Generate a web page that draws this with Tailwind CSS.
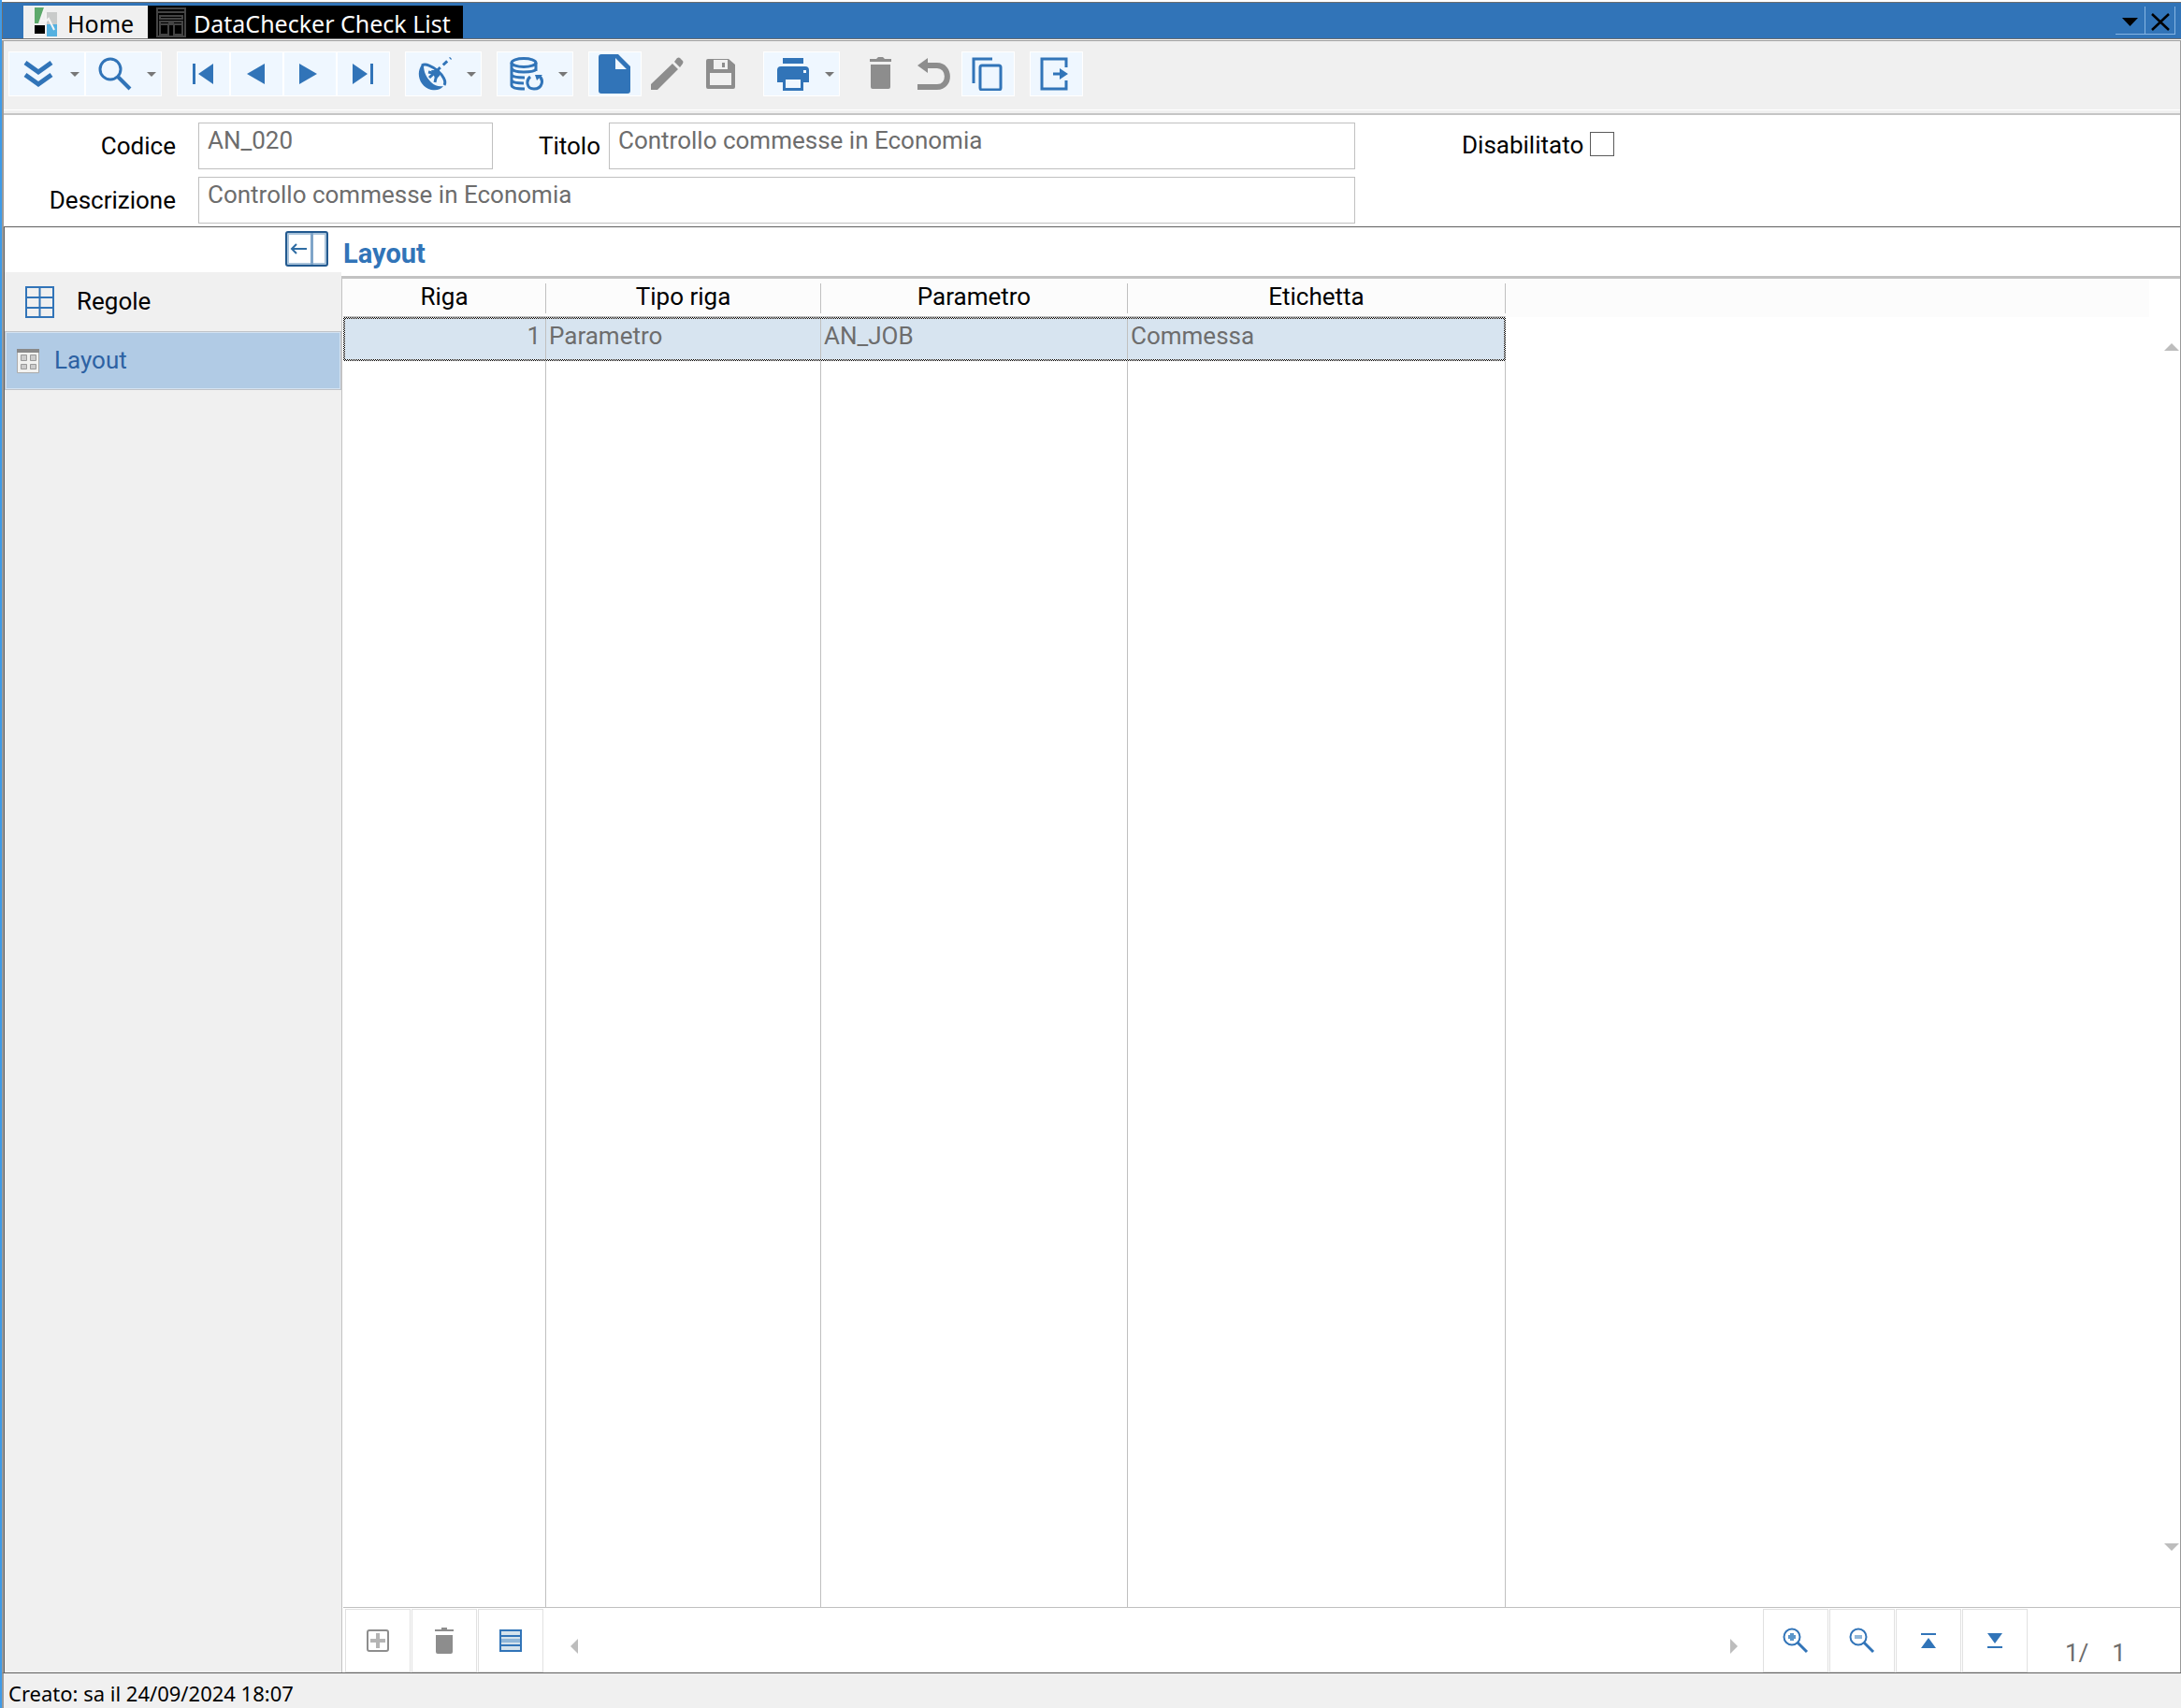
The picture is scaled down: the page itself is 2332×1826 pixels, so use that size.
<!DOCTYPE html>
<html lang="it">
<head>
    <meta charset="UTF-8">
    <meta name="viewport" content="width=device-width, initial-scale=1.0">
    <title>DataChecker Check List</title>
    <script src="https://cdn.jsdelivr.net/npm/@tailwindcss/browser@4"></script>
</head>
<body class="h-screen flex flex-col bg-white text-black text-[26px] leading-[30px] font-['Roboto',sans-serif] border-l-2 border-[#3f9be8]">

<!-- Window tabs -->
<header class="mt-[2px] h-10 flex shrink-0 items-stretch border-y border-l border-[#6e6e6e] bg-[#3174b8] pl-[22px] font-['Noto_Sans',sans-serif] text-[25px] leading-[34px]">
    <nav class="flex pt-[3px]">
        <a href="#" class="flex w-[133px] items-center gap-[11px] bg-[#f0f0f0] pl-3">
            <svg class="w-6 h-8" viewBox="0 0 24 32">
                <path fill="#5da96b" d="M0 0h11L5 17H0z"/>
                <path fill="#c9cbca" d="M13 5h11v13H13z"/>
                <path fill="#000" d="M0 19h11v9H0z"/>
                <path fill="#55b1e0" d="M13 18h11v13H13z"/>
                <path fill="none" stroke="#f4f4f4" stroke-width="2" d="M11 0L5 17M6 14h7l2-2 6 12M12 6v10"/>
            </svg>
            <span class="pt-[3px]">Home</span>
        </a>
        <a href="#" class="flex items-center gap-2 bg-black pl-[9px] pr-[13px] text-white">
            <svg class="w-8 h-8" viewBox="0 0 32 32" fill="none" stroke="#444" stroke-width="2">
                <path d="M1 1h30v30H1zM1 5h30M4 9h24v3H4zM4 15h24v3H4zM4 18h9v11H4zM19 18h9v11h-9z"/>
                <path stroke="none" fill="#444" d="M13 14h6v4h-6z"/>
            </svg>
            <span class="pt-[3px]">DataChecker Check List</span>
        </a>
    </nav>
    <div class="ml-auto mr-[6px] mt-1 flex h-[30px]">
        <button class="flex w-8 items-center justify-center border-r border-b border-[#86b5e3] pt-1" aria-label="Elenco finestre">
            <svg class="w-[17px] h-[9px]" viewBox="0 0 17 9"><path d="M0 0h17L8.500 9z"/></svg>
        </button>
        <button class="flex w-8 items-center justify-center border-r border-b border-[#86b5e3] pt-[2px]" aria-label="Chiudi">
            <svg class="w-5 h-5" viewBox="0 0 20 20" stroke="#000" stroke-width="2.500"><path d="M1 2l18 17M19 2L1 19"/></svg>
        </button>
    </div>
</header>

<div class="mt-px flex flex-1 min-h-0 flex-col border-l-2 border-r border-t border-[#9a9a9a]">

    <!-- Toolbar -->
    <div class="flex h-[79px] shrink-0 items-start gap-4 border-b-2 border-[#c5c5c5] bg-[#f0f0f0] pl-[5px] pt-[11px] text-[#3174b8] shadow-[inset_0_-3px_0_#f0f0f0,inset_0_-4px_0_#fff]">
        <div class="flex">
            <button class="flex h-12 w-[82px] items-center gap-4 border border-white bg-[#eff7ff] pl-[13px]" aria-label="Espandi">
                <svg class="w-9 h-9" viewBox="0 0 36 36" fill="none" stroke="currentColor" stroke-width="5"><path d="M4 6l14 10L32 6M4 19l14 10 14-10"/></svg>
                <svg class="w-[10px] h-[5px] fill-[#777]" viewBox="0 0 10 5"><path d="M0 0h10L5 5z"/></svg>
            </button>
            <button class="flex h-12 w-[82px] items-center gap-4 border border-white bg-[#eff7ff] pl-[13px]" aria-label="Cerca">
                <svg class="w-9 h-9" viewBox="0 0 36 36" fill="none" stroke="currentColor" stroke-width="3"><circle cx="13" cy="13" r="11"/><path stroke-width="4" d="M21 21l13 13"/></svg>
                <svg class="w-[10px] h-[5px] fill-[#777]" viewBox="0 0 10 5"><path d="M0 0h10L5 5z"/></svg>
            </button>
        </div>
        <div class="flex">
            <button class="flex h-12 w-[57px] items-center border border-white bg-[#eff7ff] pl-[9px]" aria-label="Primo">
                <svg class="w-9 h-9" viewBox="0 0 36 36" fill="currentColor"><path d="M7 7h3v22H7zM29 7v22L13 18z"/></svg>
            </button>
            <button class="flex h-12 w-[57px] items-center border border-white bg-[#eff7ff] pl-[9px]" aria-label="Precedente">
                <svg class="w-9 h-9" viewBox="0 0 36 36" fill="currentColor"><path d="M27 7v22L8 18z"/></svg>
            </button>
            <button class="flex h-12 w-[57px] items-center border border-white bg-[#eff7ff] pl-[9px]" aria-label="Successivo">
                <svg class="w-9 h-9" viewBox="0 0 36 36" fill="currentColor"><path d="M7 7v22l19-11z"/></svg>
            </button>
            <button class="flex h-12 w-[57px] items-center border border-white bg-[#eff7ff] pl-[9px]" aria-label="Ultimo">
                <svg class="w-9 h-9" viewBox="0 0 36 36" fill="currentColor"><path d="M26 7h3v22h-3zM7 7v22l16-11z"/></svg>
            </button>
        </div>
        <button class="flex h-12 w-[82px] items-center gap-4 border border-white bg-[#eff7ff] pl-[13px]" aria-label="Radar">
            <svg class="w-9 h-9" viewBox="0 0 36 36" fill="none" stroke="currentColor"><path fill="currentColor" stroke="none" d="M4 8C-3 18 2 32 14 35c6 1 10 0 13-4-4 1-9 0-13-4C9 22 6 16 6 9z"/><path stroke-width="3" d="M4 9c8-5 29 13 24 21M11 16l9 2-2 9"/><path fill="currentColor" stroke="none" d="M14 14l9 0 0 6-4 4z"/><path stroke-width="3" stroke-dasharray="6 4" d="M12 22L35 1"/></svg>
            <svg class="w-[10px] h-[5px] fill-[#777]" viewBox="0 0 10 5"><path d="M0 0h10L5 5z"/></svg>
        </button>
        <button class="flex h-12 w-[82px] items-center gap-4 border border-white bg-[#eff7ff] pl-[13px]" aria-label="Aggiorna dati">
            <svg class="w-9 h-9" viewBox="0 0 36 36" fill="none" stroke="currentColor" stroke-width="3"><ellipse cx="15" cy="6" rx="13" ry="4.500"/><path d="M2 6v24c0 3 6 4 14 4M28 6v9M2 12c1 3 7 4 13 4 6 0 12-1 13-3M2 19c1 2 6 3 14 3M2 25c1 2 6 3 13 3M22 21c-5 4-4 13 4 13 9 0 11-10 5-14"/><path fill="currentColor" stroke="none" d="M27 19h8l-6 6z"/></svg>
            <svg class="w-[10px] h-[5px] fill-[#777]" viewBox="0 0 10 5"><path d="M0 0h10L5 5z"/></svg>
        </button>
        <div class="flex">
            <button class="flex h-12 w-[57px] items-center border border-white bg-[#eff7ff] pl-[10px]" aria-label="Nuovo">
                <svg class="w-[34px] h-[42px]" viewBox="0 0 34 42" fill="currentColor"><path fill-rule="evenodd" d="M3 0h18l13 13v26q0 3-3 3H3q-3 0-3-3V3q0-3 3-3zm15 4v12h12z"/></svg>
            </button>
            <button class="flex h-12 w-[57px] items-center pl-[10px] text-[#8d8d8d]" aria-label="Modifica">
                <svg class="w-9 h-9" viewBox="0 0 36 36" fill="currentColor"><path d="M0 29L23 7l6 6L7 35H0zM25 5l3-4q2-1 3 0l3 3q1 1 0 3l-3 4z"/></svg>
            </button>
            <button class="flex h-12 w-[57px] items-center pl-[10px] text-[#8d8d8d]" aria-label="Salva">
                <svg class="w-9 h-9" viewBox="0 0 36 36" fill="currentColor"><path fill-rule="evenodd" d="M4 2h22l7 6v24q0 2-2 2H4q-2 0-2-2V4q0-2 2-2zm6 1v10h15V3zm9 3h3v5h-3zM6 17v13h23V17z"/></svg>
            </button>
        </div>
        <button class="flex h-12 w-[82px] items-center gap-4 border border-white bg-[#eff7ff] pl-[13px]" aria-label="Stampa">
            <svg class="w-9 h-9" viewBox="0 0 36 36" fill="currentColor"><path fill-rule="evenodd" d="M7 1h22v6H7zM5 10h26q4 0 4 4v13h-6v9H7v-9H1V14q0-4 4-4zm5 14v9h16v-9zm19-10v3h3v-3z"/></svg>
            <svg class="w-[10px] h-[5px] fill-[#777]" viewBox="0 0 10 5"><path d="M0 0h10L5 5z"/></svg>
        </button>
        <div class="flex">
            <button class="flex h-12 w-[57px] items-center pl-[10px] text-[#8d8d8d]" aria-label="Elimina">
                <svg class="w-9 h-9" viewBox="0 0 36 36" fill="currentColor"><path d="M6 2h7l2-2h5l2 2h7v3H6zM7 8h21v24q0 2-2 2H9q-2 0-2-2z"/></svg>
            </button>
            <button class="flex h-12 w-[57px] items-center pl-[10px] text-[#8d8d8d]" aria-label="Annulla">
                <svg class="w-9 h-9" viewBox="0 0 36 36"><path fill="currentColor" d="M0 9l11-8v16z"/><path fill="none" stroke="currentColor" stroke-width="6" d="M9 9h12c14 0 15 23 0 23H0"/></svg>
            </button>
            <button class="flex h-12 w-[57px] items-center border border-white bg-[#eff7ff] pl-[9px]" aria-label="Duplica">
                <svg class="w-9 h-9" viewBox="0 0 36 36" fill="none" stroke="currentColor" stroke-width="3"><path d="M3 28V2h20"/><rect x="10" y="9" width="22" height="26" rx="2"/></svg>
            </button>
        </div>
        <button class="flex h-12 w-[57px] items-center border border-white bg-[#eff7ff] pl-[9px]" aria-label="Esci">
            <svg class="w-9 h-9" viewBox="0 0 36 36" fill="none" stroke="currentColor" stroke-width="3"><path d="M29 11V2H3v32h26v-9"/><path d="M15 18h12"/><path fill="currentColor" stroke="none" d="M22 12l9 6-9 6z"/></svg>
        </button>
    </div>

    <!-- Record header -->
    <form class="flex h-[120px] shrink-0 flex-col gap-2 border-b border-[#5f5f5f] pt-2">
        <div class="flex items-center">
            <label for="codice" class="w-[184px] text-right">Codice</label>
            <input id="codice" value="AN_020" readonly class="ml-6 h-[50px] w-[315px] border border-[#c0c0c0] px-[9px] pb-3 text-[#6d6d6d]">
            <label for="titolo" class="w-[115px] text-right">Titolo</label>
            <input id="titolo" value="Controllo commesse in Economia" readonly class="ml-[9px] h-[50px] w-[798px] border border-[#c0c0c0] px-[9px] pb-3 text-[#6d6d6d]">
            <label for="disabilitato" class="ml-[114px] pb-[2px]">Disabilitato</label>
            <input id="disabilitato" type="checkbox" class="mb-1 ml-[7px] size-[26px] appearance-none border border-[#5a5a5a]">
        </div>
        <div class="flex items-center">
            <label for="descrizione" class="w-[184px] text-right">Descrizione</label>
            <input id="descrizione" value="Controllo commesse in Economia" readonly class="ml-6 h-[50px] w-[1237px] border border-[#c0c0c0] px-[9px] pb-3 text-[#6d6d6d]">
        </div>
    </form>

    <div class="flex min-h-0 flex-1 border-l border-[#5f5f5f]">
        <!-- Side menu -->
        <aside class="flex w-[360px] shrink-0 flex-col bg-[#f0f0f0]">
            <div class="flex h-12 justify-end bg-white pr-[14px] pt-1">
                <button class="h-[38px] w-[46px]" aria-label="Comprimi menu">
                    <svg class="h-[38px] w-[46px]" viewBox="0 0 46 38" fill="none" stroke="#22598f" stroke-width="2"><rect x="3" y="3" width="40" height="32" stroke="#a9c3da"/><rect x="1" y="1" width="44" height="36" rx="2"/><path stroke="#7fa5c9" stroke-width="3" d="M28.500 2v34"/><path stroke="#2f6ca3" d="M7 19h16M12 14l-5 5 5 5"/></svg>
                </button>
            </div>
            <a href="#" class="flex h-[63px] items-center gap-6 pl-[22px]">
                <svg class="h-[34px] w-[31px]" viewBox="0 0 31 34" fill="none" stroke="#3174b8" stroke-width="2"><path d="M1 1h29v32H1zM15.500 1v32M1 12h29M1 23h29"/></svg>
                <span class="pb-px">Regole</span>
            </a>
            <a href="#" class="flex h-[63px] items-center gap-4 border border-[#c0c3c8] bg-[#b1cbe5] pl-3 text-[#2d62a3] shadow-[inset_0_0_0_1px_#d3e2f2]">
                <svg class="h-[26px] w-6" viewBox="0 0 24 26"><path fill="#f2f2f0" stroke="#aaa" d="M.5.5h23v25H.5z"/><path fill="#8a8a8a" d="M0 0h24v4H0z"/><path fill="#ccc" stroke="#999" d="M4.500 6.500h6v6h-6zM14.500 6.500h6v6h-6zM4.500 16.500h6v5h-6zM14.500 16.500h6v5h-6z"/></svg>
                <span class="pb-px">Layout</span>
            </a>
        </aside>

        <main class="flex min-w-0 flex-1 flex-col">
            <h1 class="h-[52px] pl-[2px] pt-[11px] text-[29px] leading-[34px] font-bold text-[#3174b8]">Layout</h1>
            <div class="flex min-h-0 flex-1 flex-col border-l border-t-[3px] border-[#c3c3c3]">
                <div class="relative min-h-0 flex-1 pl-px bg-[linear-gradient(#fcfcfc,#fcfcfc)] bg-[length:calc(100%-33px)_41px] bg-no-repeat">
                    <table class="h-full table-fixed border-separate border-spacing-0">
                        <colgroup>
                            <col class="w-[217px]"><col class="w-[294px]"><col class="w-[328px]"><col class="w-[404px]">
                        </colgroup>
                        <thead>
                        <tr class="h-[41px] *:border-b *:border-[#c0c0c0] *:p-0 *:pt-[5px] *:font-normal *:leading-7">
                            <th><div class="h-8 border-r border-[#c0c0c0] mb-[3px]">Riga</div></th>
                            <th><div class="h-8 border-r border-[#c0c0c0] mb-[3px]">Tipo riga</div></th>
                            <th><div class="h-8 border-r border-[#c0c0c0] mb-[3px]">Parametro</div></th>
                            <th><div class="h-8 border-r border-[#c0c0c0] mb-[3px]">Etichetta</div></th>
                        </tr>
                        </thead>
                        <tbody>
                        <tr class="h-[47px] bg-[repeating-conic-gradient(#000_0_25%,#fff_0_50%)] bg-[length:2px_2px] text-[#6d6d6d] *:p-0 *:align-top *:leading-7">
                            <td class="border-y-2 border-l-2 border-transparent bg-[#d7e4f0] bg-clip-padding"><div class="h-[43px] border-r border-[#c0c0c0] pt-1 pr-[5px] text-right">1</div></td>
                            <td class="border-y-2 border-transparent bg-[#d7e4f0] bg-clip-padding"><div class="h-[43px] border-r border-[#c0c0c0] pl-[3px] pt-1">Parametro</div></td>
                            <td class="border-y-2 border-transparent bg-[#d7e4f0] bg-clip-padding"><div class="h-[43px] border-r border-[#c0c0c0] pl-[3px] pt-1">AN_JOB</div></td>
                            <td class="border-y-2 border-r-2 border-transparent bg-[#d7e4f0] bg-clip-padding"><div class="h-[43px] pl-[3px] pt-1">Commessa</div></td>
                        </tr>
                        <tr class="*:border-r *:border-[#c0c0c0]" aria-hidden="true"><td></td><td></td><td></td><td></td></tr>
                        </tbody>
                    </table>
                    <div class="absolute right-px top-[69px] bottom-[60px] flex flex-col justify-between" aria-hidden="true">
                        <svg class="h-2 w-4 fill-[#bdbdbd]" viewBox="0 0 16 8"><path d="M0 8h16L8 0z"/></svg>
                        <svg class="h-2 w-4 fill-[#bdbdbd]" viewBox="0 0 16 8"><path d="M0 0h16L8 8z"/></svg>
                    </div>
                </div>

                <!-- Grid footer -->
                <div class="ml-px flex h-[70px] shrink-0 items-start border-t border-[#c0c0c0] pl-[2px] pt-px text-[#3174b8]">
                    <div class="flex gap-px">
                        <button class="flex h-[68px] w-[70px] items-center justify-center border border-[#e1e1e1] text-[#8d8d8d]" aria-label="Aggiungi riga">
                            <svg class="size-6" viewBox="0 0 24 24" fill="none" stroke="currentColor" stroke-width="2"><rect x="1" y="1" width="22" height="22" rx="2"/><path stroke="#b4b4b4" stroke-width="4" d="M12 4v16M4 12h16"/></svg>
                        </button>
                        <button class="flex h-[68px] w-[70px] items-center justify-center border border-[#e1e1e1] text-[#8d8d8d]" aria-label="Elimina riga">
                            <svg class="h-7 w-6" viewBox="0 0 24 28" fill="currentColor"><path d="M2 2h7V0h6v2h7v2H2zM3 8h18v18q0 2-2 2H5q-2 0-2-2z"/></svg>
                        </button>
                        <button class="flex h-[68px] w-[70px] items-center justify-center border border-[#e1e1e1]" aria-label="Vista griglia">
                            <svg class="size-6" viewBox="0 0 24 24"><path fill="#d4e2ec" d="M0 0h24v24H0z"/><path fill="#8fb6d8" d="M1 10h22v4H1z"/><path fill="none" stroke="currentColor" stroke-width="2" d="M1 1h22v22H1zM1 7h22M1 17h22"/></svg>
                        </button>
                    </div>
                    <svg class="ml-[29px] mt-8 h-4 w-2 fill-[#bdbdbd]" viewBox="0 0 8 16"><path d="M8 0v16L0 8z"/></svg>
                    <svg class="ml-auto mr-[27px] mt-8 h-4 w-2 fill-[#bdbdbd]" viewBox="0 0 8 16"><path d="M0 0v16l8-8z"/></svg>
                    <div class="flex gap-px">
                        <button class="flex h-[68px] w-[70px] items-center justify-center border border-[#e1e1e1]" aria-label="Ingrandisci">
                            <svg class="size-7" viewBox="0 0 28 28" fill="none" stroke="currentColor" stroke-width="2"><circle cx="10" cy="10" r="8.500"/><path stroke-width="3" d="M16 16l10 10"/><path stroke="#5b96cb" stroke-width="4" d="M10 6v8M6 10h8"/></svg>
                        </button>
                        <button class="flex h-[68px] w-[70px] items-center justify-center border border-[#e1e1e1]" aria-label="Riduci">
                            <svg class="size-7" viewBox="0 0 28 28" fill="none" stroke="currentColor" stroke-width="2"><circle cx="10" cy="10" r="8.500"/><path stroke-width="3" d="M16 16l10 10"/><path stroke="#8fb6d8" stroke-width="4" d="M6 10h8"/></svg>
                        </button>
                        <button class="flex h-[68px] w-[70px] items-center justify-center border border-[#e1e1e1]" aria-label="Inizio">
                            <svg class="size-4" viewBox="0 0 16 16" fill="currentColor"><path d="M0 0h16v2H0zM8 5l8 11H0z"/></svg>
                        </button>
                        <button class="flex h-[68px] w-[70px] items-center justify-center border border-[#e1e1e1]" aria-label="Fine">
                            <svg class="size-4" viewBox="0 0 16 16" fill="currentColor"><path d="M0 14h16v2H0zM0 0h16L8 11z"/></svg>
                        </button>
                    </div>
                    <div class="flex w-[163px] gap-[25px] pl-10 pt-8 text-[#6d6d6d]"><span>1/</span><span>1</span></div>
                </div>
            </div>
        </main>
    </div>
</div>

<!-- Status bar -->
<footer class="flex h-[38px] shrink-0 items-end border-t border-l-2 border-t-[#5f5f5f] border-l-[#9a9a9a] bg-[#f0f0f0] pb-px pl-[5px] font-['Noto_Sans',sans-serif] text-[22px]">
    Creato: sa il 24/09/2024 18:07
</footer>

</body>
</html>
